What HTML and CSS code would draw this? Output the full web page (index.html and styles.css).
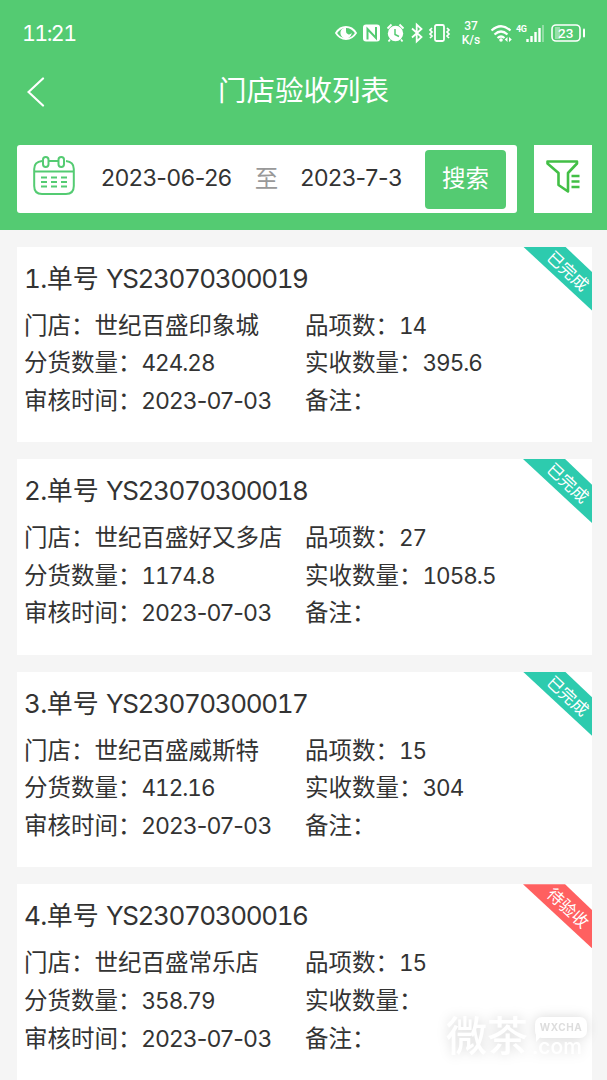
FILE: index.html
```
<!DOCTYPE html>
<html lang="zh-CN">

<head>
  <meta charset="utf-8">
  <title>门店验收列表</title>
  <link rel="stylesheet" href="styles.css">
</head>

<body>
  <header class="header">
    <div class="status-bar">
      <span class="clock">11:21</span>
      <!-- eye, nfc, alarm, bluetooth, vibrate -->
      <svg class="status-icons" width="120" height="24" viewBox="0 0 120 24">
        <path d="M2 12C7 4 17 4 22 12C17 20 7 20 2 12Z" fill="none" stroke="#fff" stroke-width="1.8" />
        <path d="M12 6.400a5.600 5.600 0 1 0 5.600 5.400a3 3 0 0 1-5.600-1.800z" fill="#fff" />
        <rect x="29" y="3.500" width="17" height="17" rx="3" fill="#fff" />
        <path d="M33.500 18.500V8l8.500 9V6" fill="none" stroke="#54cb72" stroke-width="2" />
        <circle cx="61.500" cy="12.500" r="7.700" fill="#fff" />
        <path d="M53.500 7.500l4-4M69.500 7.500l-4-4M56 18.500l-1.500 2M67 18.500l1.500 2" stroke="#fff" stroke-width="1.800" />
        <path d="M61 8v5.500l4 2" fill="none" stroke="#54cb72" stroke-width="1.500" />
        <path d="M78 7.500l9.500 8.500-4.800 4.500V3.500L87.500 8 78 16.500" fill="none" stroke="#fff" stroke-width="1.800" />
        <rect x="101" y="4" width="9" height="16" rx="1.500" fill="none" stroke="#fff" stroke-width="1.800" />
        <path d="M98 7l-2 2 2 2-2 2 2 2-2 2M113 7l2 2-2 2 2 2-2 2 2 2" fill="none" stroke="#fff" stroke-width="1.700" />
      </svg>
      <div class="speed">
        <span>37</span>
        <span>K/s</span>
      </div>
      <!-- wifi, 4G signal, battery -->
      <svg class="status-icons" width="100" height="24" viewBox="0 0 100 24">
        <path d="M3.500 9.500Q13 1 22.500 9.500M6.500 13.500Q13 7.500 19.500 13.500M9.500 17Q13 14 16.500 17" fill="none" stroke="#fff" stroke-width="2.200" />
        <circle cx="13" cy="19" r="1.800" fill="#fff" />
        <path d="M19.500 16l-2.800 2.500 2.800 2.500zM21 16l2.800 2.500L21 21z" fill="#fff" />
        <text class="net" x="28" y="11">4G</text>
        <path d="M39.500 18v3M43.500 15v6M47.500 11v10M51.500 7v14" stroke="#fff" stroke-width="2.400" />
        <path d="M55 4v17" stroke="#fff" stroke-opacity=".4" stroke-width="1.800" />
        <rect x="64" y="4" width="28" height="16" rx="4" fill="none" stroke="#fff" stroke-width="1.600" />
        <path d="M67 6h5v12h-5z" fill="#fff" fill-opacity=".4" />
        <path d="M96 8.500v7" stroke="#fff" stroke-width="2" stroke-linecap="round" />
        <text class="battery" x="70" y="16.800">23</text>
      </svg>
    </div>

    <div class="nav">
      <svg class="back" width="18" height="30" viewBox="0 0 18 30">
        <path d="M16 1.500L1.500 15 16 28.500" fill="none" stroke="#fff" stroke-width="2.200" stroke-linecap="round" />
      </svg>
      <h1>门店验收列表</h1>
    </div>

    <div class="toolbar">
      <div class="search-box">
        <svg class="calendar" width="42" height="40" viewBox="0 0 42 40">
          <g fill="none" stroke="#54cb72" stroke-width="2">
            <path d="M9 5C4 5.500 1.200 8 1.200 13V30Q1.200 38 9 38H33Q40.800 38 40.800 30V13C40.800 8 38 5.500 33 5M16 5H25M1.200 15.500H40.800" />
            <rect x="10" y="1" width="5.500" height="10" rx="2.700" />
            <rect x="25.500" y="1" width="5.500" height="10" rx="2.700" />
            <path d="M8 21.500h6M18 21.500h6M28 21.500h6M8 26h6M18 26h6M28 26h6M8 30.500h6M18 30.500h6M28 30.500h6" />
          </g>
        </svg>
        <span class="date">2023-06-26</span>
        <span class="to">至</span>
        <span class="date">2023-7-3</span>
        <button class="search-btn">搜索</button>
      </div>
      <button class="filter-btn">
        <svg width="34" height="34" viewBox="0 0 34 34">
          <path d="M1.500 1.500H31V3.500L22 13V31.500L12.500 25V13L1.500 3.500Z" fill="none" stroke="#43bf46" stroke-width="2.600" stroke-linejoin="round" />
          <path d="M25.500 16h8M25.500 21.500h8M25.500 27h8" stroke="#43bf46" stroke-width="2.400" />
        </svg>
      </button>
    </div>
  </header>

  <main class="list">
    <section class="card">
      <h2><span class="code">1.</span>单号 <span class="code">YS23070300019</span></h2>
      <div class="info">
        <p>门店：世纪百盛印象城</p>
        <p>品项数：<span class="num">14</span></p>
        <p>分货数量：<span class="num">424.28</span></p>
        <p>实收数量：<span class="num">395.6</span></p>
        <p>审核时间：<span class="day">2023-07-03</span></p>
        <p>备注：</p>
      </div>
      <div class="ribbon done"><span>已完成</span></div>
    </section>

    <section class="card">
      <h2><span class="code">2.</span>单号 <span class="code">YS23070300018</span></h2>
      <div class="info">
        <p>门店：世纪百盛好又多店</p>
        <p>品项数：<span class="num">27</span></p>
        <p>分货数量：<span class="num">1174.8</span></p>
        <p>实收数量：<span class="num">1058.5</span></p>
        <p>审核时间：<span class="day">2023-07-03</span></p>
        <p>备注：</p>
      </div>
      <div class="ribbon done"><span>已完成</span></div>
    </section>

    <section class="card">
      <h2><span class="code">3.</span>单号 <span class="code">YS23070300017</span></h2>
      <div class="info">
        <p>门店：世纪百盛威斯特</p>
        <p>品项数：<span class="num">15</span></p>
        <p>分货数量：<span class="num">412.16</span></p>
        <p>实收数量：<span class="num">304</span></p>
        <p>审核时间：<span class="day">2023-07-03</span></p>
        <p>备注：</p>
      </div>
      <div class="ribbon done"><span>已完成</span></div>
    </section>

    <section class="card">
      <h2><span class="code">4.</span>单号 <span class="code">YS23070300016</span></h2>
      <div class="info">
        <p>门店：世纪百盛常乐店</p>
        <p>品项数：<span class="num">15</span></p>
        <p>分货数量：<span class="num">358.79</span></p>
        <p>实收数量：</p>
        <p>审核时间：<span class="day">2023-07-03</span></p>
        <p>备注：</p>
      </div>
      <div class="ribbon pending"><span>待验收</span></div>
    </section>
  </main>

  <div class="watermark">
    <span class="mark-name">微茶</span>
    <div class="mark-site">
      <span class="bubble">WXCHA</span>
      <span class="mark-com">.com</span>
    </div>
  </div>
</body>

</html>
```
FILE: styles.css
```
* {
  box-sizing: border-box;
}

body {
  margin: 0;
  height: 1080px;
  overflow: hidden;
  position: relative;
  background: #f5f5f5;
  color: #333;
  font-family: Inter, "Noto Sans CJK SC", sans-serif;
}

h1, h2, p {
  margin: 0;
  font-weight: 400;
}

button {
  border: 0;
  padding: 0;
  font-family: inherit;
}

/* Green header */
.header {
  height: 229.5px;
  background: #54cb72;
  color: #fff;
}

.status-bar {
  display: flex;
  align-items: center;
  height: 65px;
  padding-left: 22px;
}

.clock {
  width: 312px;
  font-size: 21.5px;
  font-variant-numeric: tabular-nums;
  letter-spacing: -1.6px;
}

.status-icons {
  flex: none;
}

.speed {
  display: flex;
  flex-direction: column;
  width: 34px;
  font-family: Roboto, sans-serif;
  font-size: 12px;
  font-weight: 500;
  line-height: 14px;
  text-align: center;
}

.net {
  fill: #fff;
  font-family: Roboto, sans-serif;
  font-size: 9px;
  font-weight: 700;
  letter-spacing: -0.5px;
}

.battery {
  fill: #fff;
  font-family: Roboto, sans-serif;
  font-size: 13.5px;
  font-weight: 500;
}

.nav {
  display: flex;
  align-items: center;
  height: 53px;
  padding-left: 27px;
}

.nav h1 {
  flex: 1;
  margin: -2px 45px 0 0;
  text-align: center;
  font-size: 28.5px;
  line-height: 40px;
}

.toolbar {
  display: flex;
  gap: 17px;
  padding: 27px 15px 0 17px;
}

.search-box {
  display: flex;
  align-items: center;
  width: 501px;
  height: 68px;
  padding: 0 11px 0 16px;
  border-radius: 3px;
  background: #fff;
}

.calendar {
  flex: none;
  margin: -6px 26px 0 0;
}

.date {
  margin-top: -2px;
  color: #333;
  font-size: 23px;
  letter-spacing: -0.35px;
  white-space: nowrap;
}

.to {
  margin: -5px 22px 0 23px;
  color: #999;
  font-size: 23.5px;
}

.search-btn {
  width: 81px;
  height: 59px;
  margin-left: auto;
  padding-bottom: 4px;
  border-radius: 4px;
  background: #54cb72;
  color: #fff;
  font-size: 23.5px;
}

.filter-btn {
  display: flex;
  align-items: center;
  justify-content: center;
  width: 58px;
  height: 68px;
  padding-bottom: 4px;
  background: #fff;
}

/* Order cards */
.list {
  display: flex;
  flex-direction: column;
  gap: 17px;
  padding: 17px 15px 0 17px;
}

.card {
  position: relative;
  flex: none;
  height: 195.6px;
  padding: 12px 7px 0;
  overflow: hidden;
  background: #fff;
}

.card h2 {
  font-size: 26px;
  line-height: 40px;
  white-space: nowrap;
}

.code {
  font-variant-numeric: tabular-nums;
  letter-spacing: -1.4px;
}

.code:first-child {
  letter-spacing: -0.6px;
}

.info {
  display: grid;
  grid-template-columns: 281px 1fr;
  grid-auto-rows: 37.7px;
  padding-top: 8px;
}

.info p {
  font-size: 23.5px;
  line-height: 37.7px;
  white-space: nowrap;
}

.num {
  font-size: 22.5px;
  font-variant-numeric: tabular-nums;
  letter-spacing: -1px;
}

.day {
  font-size: 23px;
  letter-spacing: -0.4px;
}

/* Corner status ribbon */
.ribbon {
  position: absolute;
  top: 0;
  right: 0;
  width: 69px;
  height: 64px;
  clip-path: polygon(0 0, 61% 0, 100% 40%, 100% 100%);
  color: #fff;
}

.ribbon span {
  position: absolute;
  top: 12px;
  left: 15px;
  width: 60px;
  font-size: 16.5px;
  line-height: 24px;
  text-align: center;
  transform: rotate(43deg);
}

.done {
  background: #2dcbae;
}

.pending {
  background: #ff6060;
}

/* Site watermark over the list */
.watermark {
  position: absolute;
  left: 446px;
  top: 1012px;
  display: flex;
  gap: 4px;
  color: #fff;
  filter: drop-shadow(0 0 6px rgba(0, 0, 0, 0.15));
}

.mark-name {
  font-size: 41px;
  font-weight: 500;
  line-height: 48px;
}

.mark-site {
  display: flex;
  flex-direction: column;
}

.bubble {
  position: relative;
  width: 52px;
  height: 21px;
  margin: 5px 0 0 3px;
  border-radius: 7px;
  background: #fff;
  color: #ddd;
  font-size: 10px;
  font-weight: 700;
  letter-spacing: 0.6px;
  line-height: 21px;
  text-align: center;
}

/* speech bubble tail */
.bubble::after {
  content: "";
  position: absolute;
  left: 1px;
  top: 17px;
  border-top: 8px solid #fff;
  border-right: 7px solid transparent;
}

.mark-com {
  font-size: 21px;
  font-weight: 500;
  line-height: 18px;
}
```
